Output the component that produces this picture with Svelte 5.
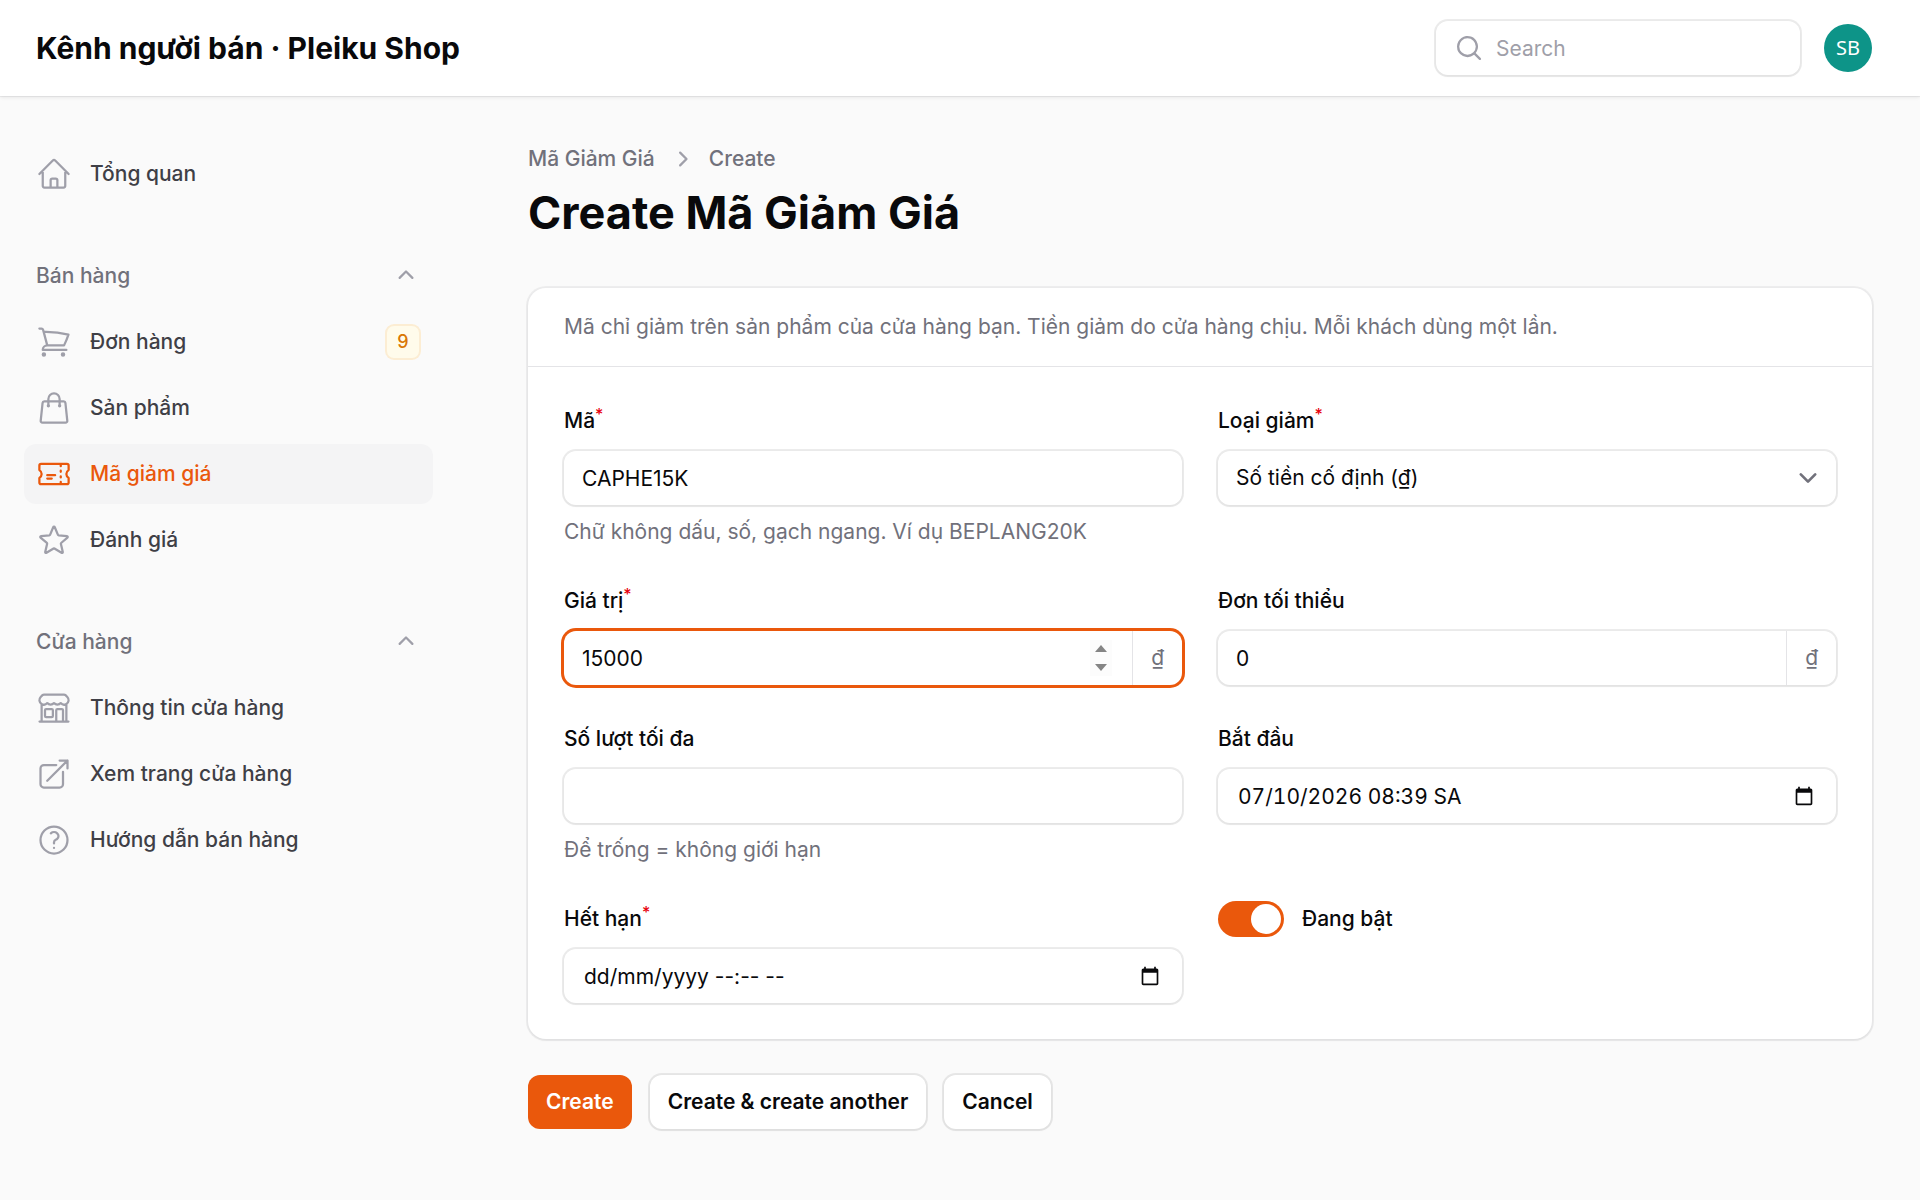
<script>
  const icons = {
    home: 'm2.25 12 8.954-8.955c.44-.439 1.152-.439 1.591 0L21.75 12M4.5 9.75v10.125c0 .621.504 1.125 1.125 1.125H9.75v-4.875c0-.621.504-1.125 1.125-1.125h2.25c.621 0 1.125.504 1.125 1.125V21h4.125c.621 0 1.125-.504 1.125-1.125V9.75M8.25 21h8.25',
    cart: 'M2.25 3h1.386c.51 0 .955.343 1.087.835l.383 1.437M7.5 14.25a3 3 0 0 0-3 3h15.75m-12.75-3h11.218c1.121-2.3 2.1-4.684 2.924-7.138a60.114 60.114 0 0 0-16.536-1.84M7.5 14.25 5.106 5.272M6 20.25a.75.75 0 1 1-1.5 0 .75.75 0 0 1 1.5 0Zm12.75 0a.75.75 0 1 1-1.5 0 .75.75 0 0 1 1.5 0Z',
    bag: 'M15.75 10.5V6a3.75 3.75 0 1 0-7.5 0v4.5m11.356-1.993 1.263 12c.07.665-.45 1.243-1.119 1.243H4.25a1.125 1.125 0 0 1-1.12-1.243l1.264-12A1.125 1.125 0 0 1 5.513 7.5h12.974c.576 0 1.059.435 1.119 1.007ZM8.625 10.5a.375.375 0 1 1-.75 0 .375.375 0 0 1 .75 0Zm7.5 0a.375.375 0 1 1-.75 0 .375.375 0 0 1 .75 0Z',
    ticket: 'M16.5 6v.75m0 3v.75m0 3v.75m0 3V18m-9-5.25h5.25M7.5 15h3M3.375 5.25c-.621 0-1.125.504-1.125 1.125v3.026a2.999 2.999 0 0 1 0 5.198v3.026c0 .621.504 1.125 1.125 1.125h17.25c.621 0 1.125-.504 1.125-1.125v-3.026a2.999 2.999 0 0 1 0-5.198V6.375c0-.621-.504-1.125-1.125-1.125H3.375Z',
    star: 'M11.48 3.499a.562.562 0 0 1 1.04 0l2.125 5.111a.563.563 0 0 0 .475.345l5.518.442c.499.04.701.663.321.988l-4.204 3.602a.563.563 0 0 0-.182.557l1.285 5.385a.562.562 0 0 1-.84.61l-4.725-2.885a.562.562 0 0 0-.586 0L6.982 20.54a.562.562 0 0 1-.84-.61l1.285-5.386a.562.562 0 0 0-.182-.557l-4.204-3.602a.562.562 0 0 1 .321-.988l5.518-.442a.563.563 0 0 0 .475-.345L11.48 3.5Z',
    store: 'M13.5 21v-7.5a.75.75 0 0 1 .75-.75h3a.75.75 0 0 1 .75.75V21m-4.5 0H2.36m11.14 0H18m0 0h3.64m-1.39 0V9.349M3.75 21V9.349m0 0a3.001 3.001 0 0 0 3.75-.615A2.993 2.993 0 0 0 9.75 9.75c.896 0 1.7-.393 2.25-1.016a2.993 2.993 0 0 0 2.25 1.016c.896 0 1.7-.393 2.25-1.015a3.001 3.001 0 0 0 3.75.614m-16.5 0a3.004 3.004 0 0 1-.621-4.72l1.189-1.19A1.5 1.5 0 0 1 5.378 3h13.243a1.5 1.5 0 0 1 1.06.44l1.19 1.189a3 3 0 0 1-.621 4.72M6.75 18h3.75a.75.75 0 0 0 .75-.75V13.5a.75.75 0 0 0-.75-.75H6.75a.75.75 0 0 0-.75.75v3.75c0 .414.336.75.75.75Z',
    external: 'M13.5 6H5.25A2.25 2.25 0 0 0 3 8.25v10.5A2.25 2.25 0 0 0 5.25 21h10.5A2.25 2.25 0 0 0 18 18.75V10.5m-10.5 6L21 3m0 0h-5.25M21 3v5.25',
    help: 'M9.879 7.519c1.171-1.025 3.071-1.025 4.242 0 1.172 1.025 1.172 2.687 0 3.712-.203.179-.43.326-.67.442-.745.361-1.45.999-1.45 1.827v.75M21 12a9 9 0 1 1-18 0 9 9 0 0 1 18 0Zm-9 5.25h.008v.008H12v-.008Z',
  };

  let groups = $state([
    { label: '', open: true, items: [{ label: 'Tổng quan', icon: 'home' }] },
    {
      label: 'Bán hàng',
      open: true,
      items: [
        { label: 'Đơn hàng', icon: 'cart', badge: 9 },
        { label: 'Sản phẩm', icon: 'bag' },
        { label: 'Mã giảm giá', icon: 'ticket', active: true },
        { label: 'Đánh giá', icon: 'star' },
      ],
    },
    {
      label: 'Cửa hàng',
      open: true,
      items: [
        { label: 'Thông tin cửa hàng', icon: 'store' },
        { label: 'Xem trang cửa hàng', icon: 'external' },
        { label: 'Hướng dẫn bán hàng', icon: 'help' },
      ],
    },
  ]);

  let code = $state('CAPHE15K');
  let type = $state('fixed');
  let value = $state(15000);
  let minOrder = $state(0);
  let maxUses = $state('');
  let startsAt = $state('07/10/2026 08:39 SA');
  let endsAt = $state('');
  let enabled = $state(true);
  let focused = $state('value');
</script>

{#snippet calendar(label)}
  <button type="button" class="calendar" aria-label={label}>
    <svg viewBox="0 0 24 24" fill="currentColor">
      <path d="M20 3h-1V1h-2v2H7V1H5v2H4c-1.1 0-2 .9-2 2v16c0 1.1.9 2 2 2h16c1.1 0 2-.9 2-2V5c0-1.1-.9-2-2-2zm0 18H4V8h16v13z" />
    </svg>
  </button>
{/snippet}

<div class="page">
  <header class="topbar">
    <a class="brand" href="#home">Kênh người bán · Pleiku Shop</a>
    <div class="topbar-end">
      <label class="control search">
        <svg class="mini" viewBox="0 0 20 20" fill="currentColor">
          <path fill-rule="evenodd" d="M9 3.5a5.5 5.5 0 1 0 0 11 5.5 5.5 0 0 0 0-11ZM2 9a7 7 0 1 1 12.452 4.391l3.328 3.329a.75.75 0 1 1-1.06 1.06l-3.329-3.328A7 7 0 0 1 2 9Z" />
        </svg>
        <input type="search" placeholder="Search" aria-label="Search" />
      </label>
      <button type="button" class="avatar">SB</button>
    </div>
  </header>

  <div class="layout">
    <nav class="sidebar">
      {#each groups as group}
        <div class="group">
          {#if group.label}
            <button type="button" class="group-header" aria-expanded={group.open} onclick={() => (group.open = !group.open)}>
              <span>{group.label}</span>
              <svg class="mini" class:closed={!group.open} viewBox="0 0 20 20" fill="currentColor">
                <path d="M9.47 6.47a.75.75 0 0 1 1.06 0l4.25 4.25a.75.75 0 1 1-1.06 1.06L10 8.06l-3.72 3.72a.75.75 0 0 1-1.06-1.06l4.25-4.25Z" />
              </svg>
            </button>
          {/if}
          {#if group.open}
            {#each group.items as item}
              <a class="item" class:active={item.active} href="#{item.icon}">
                <svg viewBox="0 0 24 24" fill="none" stroke="currentColor" stroke-width="1.5" stroke-linecap="round" stroke-linejoin="round">
                  <path d={icons[item.icon]} />
                </svg>
                <span class="item-label">{item.label}</span>
                {#if item.badge}
                  <span class="badge">{item.badge}</span>
                {/if}
              </a>
            {/each}
          {/if}
        </div>
      {/each}
    </nav>

    <main>
      <div class="breadcrumbs">
        <a href="#ticket">Mã Giảm Giá</a>
        <svg class="mini" viewBox="0 0 20 20" fill="currentColor">
          <path d="M8.22 5.22a.75.75 0 0 1 1.06 0l4.25 4.25a.75.75 0 0 1 0 1.06l-4.25 4.25a.75.75 0 0 1-1.06-1.06L11.94 10 8.22 6.28a.75.75 0 0 1 0-1.06Z" />
        </svg>
        <span>Create</span>
      </div>
      <h1>Create Mã Giảm Giá</h1>

      <form onsubmit={(e) => e.preventDefault()}>
        <section class="card">
          <p class="card-header">Mã chỉ giảm trên sản phẩm của cửa hàng bạn. Tiền giảm do cửa hàng chịu. Mỗi khách dùng một lần.</p>

          <div class="fields">
            <div class="field">
              <label for="code">Mã<sup>*</sup></label>
              <div class="control">
                <input id="code" type="text" bind:value={code} />
              </div>
              <p class="hint">Chữ không dấu, số, gạch ngang. Ví dụ BEPLANG20K</p>
            </div>

            <div class="field">
              <label for="type">Loại giảm<sup>*</sup></label>
              <div class="control">
                <select id="type" bind:value={type}>
                  <option value="fixed">Số tiền cố định (₫)</option>
                  <option value="percent">Phần trăm (%)</option>
                </select>
                <svg class="select-arrow" viewBox="0 0 20 20" fill="none" stroke="currentColor" stroke-width="1.5" stroke-linecap="round" stroke-linejoin="round">
                  <path d="m6 8 4 4 4-4" />
                </svg>
              </div>
            </div>

            <div class="field">
              <label for="value">Giá trị<sup>*</sup></label>
              <div class="control" class:focused={focused === 'value'}>
                <input id="value" type="number" bind:value onfocus={() => (focused = 'value')} onblur={() => (focused = '')} />
                <div class="spinner">
                  <button type="button" aria-label="Tăng" onclick={() => value++}>
                    <svg viewBox="0 0 12 8" fill="currentColor"><path d="M6 0 12 7H0Z" /></svg>
                  </button>
                  <button type="button" aria-label="Giảm" onclick={() => value--}>
                    <svg viewBox="0 0 12 8" fill="currentColor"><path d="M6 8 0 1h12Z" /></svg>
                  </button>
                </div>
                <span class="suffix">₫</span>
              </div>
            </div>

            <div class="field">
              <label for="min-order">Đơn tối thiểu</label>
              <div class="control">
                <input id="min-order" type="number" bind:value={minOrder} />
                <span class="suffix">₫</span>
              </div>
            </div>

            <div class="field">
              <label for="max-uses">Số lượt tối đa</label>
              <div class="control">
                <input id="max-uses" type="number" bind:value={maxUses} />
              </div>
              <p class="hint">Để trống = không giới hạn</p>
            </div>

            <div class="field">
              <label for="starts-at">Bắt đầu</label>
              <div class="control">
                <input id="starts-at" class="date" type="text" bind:value={startsAt} />
                {@render calendar('Chọn ngày bắt đầu')}
              </div>
            </div>

            <div class="field">
              <label for="ends-at">Hết hạn<sup>*</sup></label>
              <div class="control">
                <input id="ends-at" class="date" type="text" placeholder="dd/mm/yyyy --:-- --" bind:value={endsAt} />
                {@render calendar('Chọn ngày hết hạn')}
              </div>
            </div>

            <div class="field">
              <label class="toggle">
                <input type="checkbox" role="switch" bind:checked={enabled} />
                Đang bật
              </label>
            </div>
          </div>
        </section>

        <div class="actions">
          <button type="submit" class="btn primary">Create</button>
          <button type="button" class="btn">Create &amp; create another</button>
          <button type="button" class="btn">Cancel</button>
        </div>
      </form>
    </main>
  </div>
</div>

<style>
  :global(body) {
    background: #fafafa;
  }

  .page {
    min-height: 100vh;
    font-family: Inter, "Noto Sans", sans-serif;
    font-size: 21px;
    line-height: 30px;
    color: #09090b;
  }

  .page * {
    box-sizing: border-box;
  }

  a {
    color: inherit;
    text-decoration: none;
  }

  button,
  input,
  select {
    margin: 0;
    padding: 0;
    border: 0;
    background: none;
    font: inherit;
    color: inherit;
  }

  button {
    cursor: pointer;
  }

  .mini {
    flex: none;
    width: 30px;
    height: 30px;
    color: #9f9fa9;
  }

  .topbar {
    display: flex;
    align-items: center;
    justify-content: space-between;
    min-height: 96px;
    padding: 0 48px 0 36px;
    background: #fff;
    box-shadow: 0 0 0 1px rgba(9, 9, 11, 0.05), 0 1px 4px rgba(0, 0, 0, 0.1);
    position: relative;
  }

  .brand {
    font-size: 30px;
    line-height: 36px;
    font-weight: 700;
  }

  .topbar-end {
    display: flex;
    align-items: center;
    gap: 24px;
  }

  .control {
    position: relative;
    display: flex;
    align-items: center;
    background: #fff;
    border-radius: 12px;
    box-shadow: 0 0 0 2px rgba(9, 9, 11, 0.08), 0 1px 3px rgba(0, 0, 0, 0.06);
  }

  .control.focused {
    box-shadow: 0 0 0 3px #ea580c;
  }

  .control input,
  .control select {
    flex: 1;
    min-width: 0;
    height: 54px;
    padding: 0 18px;
    outline: none;
    appearance: none;
  }

  .control input::placeholder {
    color: #9f9fa9;
    opacity: 1;
  }

  .control .date {
    padding-left: 20px;
    font-variant-numeric: tabular-nums;
  }

  .control .date::placeholder {
    color: #09090b;
  }

  .control .date:placeholder-shown {
    font-variant-numeric: normal;
  }

  input[type="number"] {
    appearance: textfield;
  }

  input[type="number"]::-webkit-inner-spin-button {
    appearance: none;
  }

  .search {
    width: 364px;
    padding-left: 18px;
  }

  .search input {
    padding-left: 12px;
  }

  .avatar {
    width: 48px;
    height: 48px;
    border-radius: 50%;
    background: #0d9488;
    color: #fff;
    font-family: "Noto Sans", sans-serif;
    font-size: 20px;
  }

  .layout {
    display: flex;
    align-items: flex-start;
  }

  .sidebar {
    flex: none;
    display: flex;
    flex-direction: column;
    gap: 42px;
    width: 480px;
    padding: 48px 47px 48px 24px;
    font-weight: 500;
  }

  .group {
    display: flex;
    flex-direction: column;
    gap: 6px;
  }

  .group-header {
    display: flex;
    align-items: center;
    justify-content: space-between;
    padding: 15px 12px;
    color: #71717b;
  }

  .closed {
    transform: rotate(180deg);
  }

  .item {
    display: flex;
    align-items: center;
    gap: 18px;
    padding: 12px;
    border-radius: 12px;
    color: #3f3f46;
  }

  .item svg {
    flex: none;
    width: 36px;
    height: 36px;
    color: #9f9fa9;
  }

  .item-label {
    flex: 1;
  }

  .item.active {
    background: #f4f4f5;
    color: #ea580c;
  }

  .item.active svg {
    color: #ea580c;
  }

  .badge {
    min-width: 36px;
    padding: 6px;
    border-radius: 9px;
    background: #fffbeb;
    box-shadow: inset 0 0 0 2px rgba(225, 113, 0, 0.1);
    font-size: 18px;
    line-height: 24px;
    text-align: center;
    color: #d97706;
  }

  main {
    flex: 1;
    min-width: 0;
    padding: 48px;
  }

  .breadcrumbs {
    display: flex;
    align-items: center;
    gap: 12px;
    margin-bottom: 12px;
    font-weight: 500;
    color: #71717b;
  }

  h1 {
    margin: 0 0 48px;
    font-size: 45px;
    line-height: 54px;
    font-weight: 700;
  }

  .card {
    background: #fff;
    border-radius: 18px;
    box-shadow: 0 0 0 2px rgba(9, 9, 11, 0.05), 0 1px 3px rgba(0, 0, 0, 0.08);
  }

  .card-header {
    margin: 0;
    padding: 24px 36px;
    border-bottom: 1px solid #e4e4e7;
    color: #71717b;
  }

  .fields {
    display: grid;
    grid-template-columns: 1fr 1fr;
    gap: 36px;
    padding: 36px;
  }

  .field {
    display: flex;
    flex-direction: column;
    gap: 12px;
  }

  .field label {
    align-self: flex-start;
    line-height: 36px;
    font-weight: 500;
  }

  sup {
    font-size: 16px;
    line-height: 0;
    color: #e7000b;
  }

  .hint {
    margin: 0;
    color: #71717b;
  }

  .control .select-arrow {
    position: absolute;
    right: 10px;
    width: 36px;
    height: 36px;
    color: #71717b;
    pointer-events: none;
  }

  .spinner {
    display: flex;
    flex-direction: column;
    margin-right: 20px;
    background: #fcfcfc;
    color: #858585;
  }

  .spinner button {
    display: flex;
    align-items: center;
    justify-content: center;
    width: 22px;
    height: 18px;
  }

  .spinner svg {
    width: 12px;
    height: 8px;
  }

  .suffix {
    align-self: stretch;
    display: flex;
    align-items: center;
    padding: 0 18px;
    border-left: 1px solid #e4e4e7;
    color: #71717b;
  }

  .calendar {
    display: flex;
    margin-right: 22px;
  }

  .calendar svg {
    width: 20px;
    height: 20px;
  }

  .toggle {
    display: flex;
    align-items: center;
    gap: 18px;
  }

  .toggle input {
    display: flex;
    width: 66px;
    height: 36px;
    padding: 3px;
    border-radius: 18px;
    background: #d4d4d8;
    appearance: none;
  }

  .toggle input::before {
    content: "";
    width: 30px;
    height: 30px;
    border-radius: 50%;
    background: #fff;
  }

  .toggle input:checked {
    justify-content: flex-end;
    background: #ea580c;
  }

  .actions {
    display: flex;
    flex-wrap: wrap;
    gap: 18px;
    margin-top: 36px;
  }

  .btn {
    padding: 12px 18px;
    border-radius: 12px;
    background: #fff;
    box-shadow: 0 0 0 2px rgba(9, 9, 11, 0.08), 0 1px 3px rgba(0, 0, 0, 0.06);
    font-weight: 600;
  }

  .btn.primary {
    background: #ea580c;
    box-shadow: none;
    color: #fff;
  }
</style>
